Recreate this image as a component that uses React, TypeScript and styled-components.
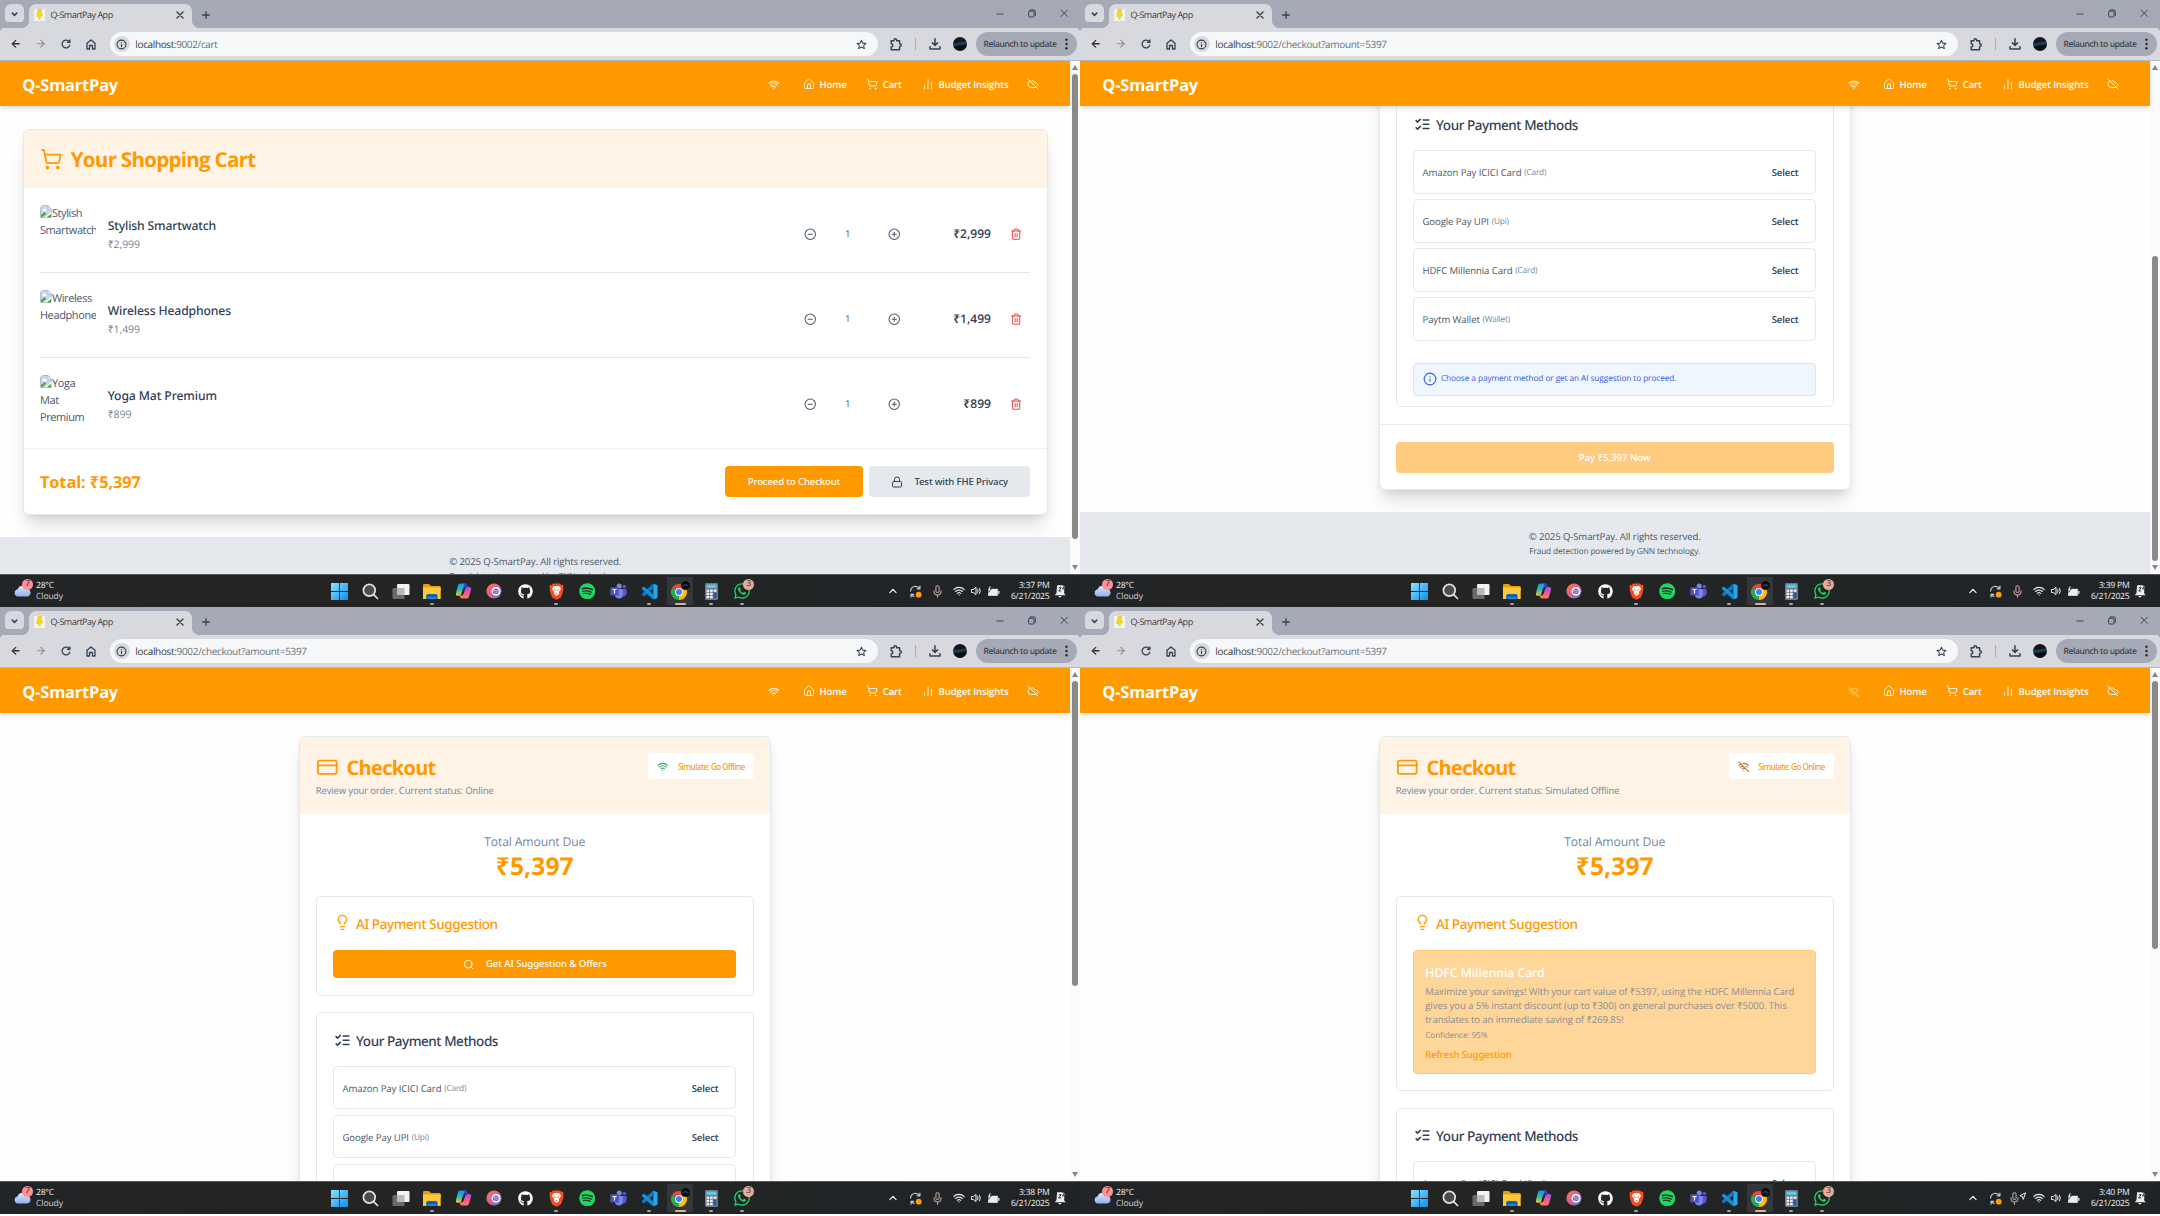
import React from "react";
import styled, { createGlobalStyle } from "styled-components";
import {
  ArrowLeft, ArrowRight, ChartNoAxesColumn, CircleMinus, CirclePlus, CloudOff, CreditCard, House, Info,
  Lightbulb, Lock, Search, ShoppingCart, Trash2, Wifi, WifiOff,
} from "lucide-react";
import { FaGithub, FaSpotify, FaWhatsapp } from "react-icons/fa";

const orange = "#ff9900";
const border = "#e4e9ee";
const ink = "#334155";
const muted = "#74879e";

const GlobalStyle = createGlobalStyle`
  * { box-sizing: border-box; }
  body {
    margin: 0;
    width: 2160px;
    height: 1216px;
    overflow: hidden;
    background: #fff;
    font-family: "Open Sans", "Noto Sans", sans-serif;
    color: ${ink};
    text-rendering: geometricPrecision;
  }
  svg { display: block; flex: none; }
`;

/* ---------- shared text ---------- */
const Text = styled.span<{ $size: number; $weight?: number; $color?: string; $track?: number; $lh?: number; $mt?: number }>`
  margin-top: ${(p) => p.$mt ?? 0}px;
  font-family: ${(p) => (p.$weight === 500 ? '"Noto Sans", sans-serif' : "inherit")};
  font-size: ${(p) => p.$size}px;
  font-weight: ${(p) => p.$weight ?? 400};
  color: ${(p) => p.$color ?? "inherit"};
  letter-spacing: ${(p) => p.$track ?? 0}px;
  line-height: ${(p) => p.$lh ?? 14}px;
  white-space: nowrap;
`;

/* ---------- desktop and browser chrome ---------- */
const Desktop = styled.div`
  display: grid;
  grid-template-columns: 1080px 1080px;
  grid-template-rows: 607px 607px;
`;
const Screen = styled.section`
  display: flex;
  flex-direction: column;
  overflow: hidden;
`;
const TabStrip = styled.div`
  display: flex;
  height: 28px;
  flex: none;
  background: #a6aab6;
  padding: 4px 12px 0 5px;
  align-items: flex-start;
`;
const TabSearch = styled.div`
  display: flex;
  width: 19px;
  height: 20px;
  border-radius: 6px;
  background: #d8d9df;
  align-items: center;
  justify-content: center;
`;
const Tab = styled.div`
  position: relative;
  display: flex;
  width: 163.5px;
  height: 24px;
  margin-left: 4.5px;
  padding: 0 7.8px 3px 5.5px;
  border-radius: 7px 7px 0 0;
  background: #d8d9df;
  color: #3a3c42;
  align-items: center;
  &::before, &::after {
    content: "";
    position: absolute;
    bottom: 0;
    width: 7px;
    height: 7px;
  }
  &::before { left: -7px; background: radial-gradient(circle at 0 0, transparent 6.6px, #d8d9df 7.2px); }
  &::after { right: -7px; background: radial-gradient(circle at 100% 0, transparent 6.6px, #d8d9df 7.2px); }
`;
const Favicon = styled.div`
  display: flex;
  width: 11px;
  height: 12px;
  margin-right: 5.5px;
  background: #f4f3ea;
  align-items: center;
  justify-content: center;
`;
const TabClose = styled.div`margin-left: auto;`;
const NewTab = styled.div`margin: 6.5px 0 0 9.5px;`;
const WindowButtons = styled.div`
  display: flex;
  width: 72px;
  margin: 5px 0 0 auto;
  align-items: center;
  justify-content: space-between;
`;
const Toolbar = styled.div`
  display: flex;
  height: 33px;
  flex: none;
  padding: 0 3px 0 2.7px;
  border-bottom: 1.5px solid #b4b6bd;
  background: linear-gradient(#d8d9df, #d8d9df) padding-box;
  border-radius: 5px 5px 0 0;
  box-shadow: 0 -6px 0 0 #a6aab6;
  align-items: center;
`;
const ToolCell = styled.div<{ $w: number }>`
  display: flex;
  width: ${(p) => p.$w}px;
  flex: none;
  align-items: center;
  justify-content: center;
`;
const Omnibox = styled.div`
  display: flex;
  width: 768px;
  height: 24px;
  margin-left: 6px;
  padding: 0 11px 0 3.7px;
  border-radius: 12px;
  background: #f5f7f9;
  align-items: center;
`;
const SiteInfo = styled.div`
  display: flex;
  width: 16px;
  height: 16px;
  margin-right: 5.8px;
  border-radius: 50%;
  background: #d8d9df;
  align-items: center;
  justify-content: center;
`;
const StarSlot = styled.div`margin-left: auto;`;
const Separator = styled.div`width: 1px; height: 12px; background: #a6aab6;`;
const Avatar = styled.div`
  width: 14px;
  height: 14px;
  border-radius: 50%;
  background: linear-gradient(170deg, #15181a 38%, #1d4c6c 46%, #10283b 58%, #090b0d 66%);
`;
const UpdatePill = styled.div`
  display: flex;
  width: 101.5px;
  height: 24px;
  padding: 0 9.5px 0 8px;
  margin-left: auto;
  border-radius: 12px;
  background: #a6aab6;
  color: #3a3d44;
  align-items: center;
  justify-content: space-between;
`;

/* ---------- page frame ---------- */
const PageRow = styled.div`display: flex; height: 512.5px; flex: none; overflow: hidden; background: #fefefe;`;
const Viewport = styled.div<{ $w: number }>`
  display: flex;
  flex-direction: column;
  width: ${(p) => p.$w}px;
  flex: none;
`;
const Header = styled.header<{ $w: number }>`
  position: relative;
  z-index: 1;
  display: flex;
  height: 45.3px;
  flex: none;
  padding: 3px ${(p) => p.$w - 1038.5}px 0 22.3px;
  background: ${orange};
  color: #fff;
  box-shadow: 0 2px 4px rgba(0, 0, 0, 0.14);
  align-items: center;
  justify-content: space-between;
`;
const Nav = styled.nav`display: flex; align-items: center;`;
const NavItem = styled.div<{ $w: number }>`
  display: flex;
  width: ${(p) => p.$w}px;
  gap: 5px;
  align-items: center;
`;
const NavIcon = styled.div<{ $color?: string }>`margin-top: -1.5px; color: ${(p) => p.$color ?? "#fff3df"};`;
const Scroller = styled.div<{ $end?: boolean }>`
  display: flex;
  flex: 1;
  min-height: 0;
  flex-direction: column;
  overflow: hidden;
  justify-content: ${(p) => (p.$end ? "flex-end" : "flex-start")};
`;
const Main = styled.main`flex: none; padding: 22.7px 22.5px;`;
const Footer = styled.footer`
  display: flex;
  flex: none;
  height: 61.2px;
  padding-top: 17px;
  background: #e5e8ed;
  color: #4a5869;
  flex-direction: column;
  align-items: center;
`;
const ScrollTrack = styled.div`
  display: flex;
  flex: 1;
  padding: 4px 1.5px 4px 2.2px;
  background: #fbfbfb;
  flex-direction: column;
  align-items: center;
`;
const Arrow = styled.div<{ $down?: boolean }>`
  border: 3.4px solid transparent;
  border-${(p) => (p.$down ? "top" : "bottom")}: 5px solid #868686;
  border-${(p) => (p.$down ? "bottom" : "top")}-width: 0;
`;
const Thumb = styled.div<{ $top: number; $h: number }>`
  width: 6px;
  height: ${(p) => p.$h}px;
  margin: ${(p) => p.$top}px 0 auto;
  border-radius: 3px;
  background: #8a8a8a;
`;

/* ---------- cards ---------- */
const Card = styled.div<{ $w?: number }>`
  width: ${(p) => (p.$w ? p.$w + "px" : "auto")};
  margin: 0 auto;
  border: 1px solid ${border};
  border-radius: 6px;
  background: #fff;
  box-shadow: 0 14px 18px -4px rgba(0, 0, 0, 0.13), 0 4px 8px -3px rgba(0, 0, 0, 0.1);
`;
const Banner = styled.div<{ $h: number }>`
  display: flex;
  height: ${(p) => p.$h}px;
  padding: 15.8px 16.2px;
  border-radius: 5px 5px 0 0;
  background: #fff3e6;
  color: ${orange};
  justify-content: space-between;
  align-items: flex-start;
`;
const TitleRow = styled.div<{ $gap: number }>`display: flex; gap: ${(p) => p.$gap}px; align-items: center;`;

/* cart */
const CartList = styled.div`padding: 0 16.4px;`;
const CartRow = styled.div<{ $last?: boolean }>`
  display: flex;
  height: ${(p) => (p.$last ? 90.4 : 85)}px;
  padding-top: 16.9px;
  border-bottom: ${(p) => (p.$last ? "none" : `1px solid ${border}`)};
`;
const Thumbnail = styled.div`
  width: 56.3px;
  height: 56.3px;
  border-radius: 4px;
  overflow: hidden;
  color: #4b5869;
`;
const AltLine = styled.div`display: flex; height: 17px; align-items: center;`;
const BrokenMark = styled.div`align-self: flex-start;`;
const ItemText = styled.div`
  display: flex;
  padding: 11px 0 0 11.5px;
  flex-direction: column;
`;
const ItemControls = styled.div`
  display: flex;
  height: 58px;
  margin-left: auto;
  align-items: center;
  color: #4b5869;
`;
const ControlCell = styled.div<{ $w: number; $end?: boolean; $color?: string }>`
  display: flex;
  width: ${(p) => p.$w}px;
  color: ${(p) => p.$color ?? "inherit"};
  justify-content: ${(p) => (p.$end ? "flex-end" : "center")};
`;
const CartFooter = styled.div`
  display: flex;
  height: 65.2px;
  padding: 0 16.4px;
  border-top: 1.5px solid #eef1f4;
  align-items: center;
`;
const CartButton = styled.button<{ $w: number; $soft?: boolean }>`
  display: flex;
  width: ${(p) => p.$w}px;
  height: 31.5px;
  padding: 0;
  margin-left: ${(p) => (p.$soft ? "6px" : "auto")};
  border: 0;
  border-radius: 4px;
  gap: 11px;
  font-family: inherit;
  background: ${(p) => (p.$soft ? "#e5e8ed" : orange)};
  color: ${(p) => (p.$soft ? ink : "#fff")};
  align-items: center;
  justify-content: center;
`;

/* checkout */
const StatusButton = styled.button<{ $w: number }>`
  display: flex;
  width: ${(p) => p.$w}px;
  height: 26px;
  margin-top: 0.7px;
  padding: 1px 9px 0 9px;
  border: 0;
  border-radius: 4px;
  background: #fff;
  color: ${orange};
  font-family: inherit;
  align-items: center;
  justify-content: space-between;
`;
const CheckoutBody = styled.div`padding: 16.9px 16.4px;`;
const Due = styled.div`display: flex; height: 65px; padding-top: 1.2px; flex-direction: column; align-items: center;`;
const Panel = styled.div<{ $bottom?: number }>`
  margin-bottom: 16.9px;
  padding: 16.4px 16.2px ${(p) => p.$bottom ?? 16.4}px;
  border: 1px solid ${border};
  border-radius: 5px;
  &:last-child { margin-bottom: 0; }
`;
const PanelTitle = styled.div<{ $color: string }>`
  display: flex;
  height: 36px;
  padding-left: 1px;
  gap: 5px;
  color: ${(p) => p.$color};
  align-items: flex-start;
`;
const WideButton = styled.button<{ $h: number; $faded?: boolean }>`
  display: flex;
  width: 100%;
  height: ${(p) => p.$h}px;
  padding: 1px 0 0;
  border: 0;
  border-radius: 4px;
  gap: 12px;
  background: ${(p) => (p.$faded ? "#ffcb80" : orange)};
  color: #fff;
  font-family: inherit;
  align-items: center;
  justify-content: center;
`;
const Suggestion = styled.div`
  display: flex;
  height: 124px;
  padding: 12px 11.2px;
  border: 1px solid #ffc978;
  border-radius: 4px;
  background: #ffd699;
  color: #8b8f94;
  flex-direction: column;
`;
const Methods = styled.div`display: flex; flex-direction: column; gap: 5.5px;`;
const Method = styled.div`
  display: flex;
  height: 43.5px;
  padding: 2px 17px 0 8.4px;
  border: 1px solid ${border};
  border-radius: 4.5px;
  gap: 2.8px;
  align-items: center;
`;
const SelectLabel = styled.div`margin-left: auto; display: flex;`;
const Hint = styled.div`
  display: flex;
  height: 32.7px;
  margin-top: 22px;
  padding: 0 8.5px;
  border: 1px solid #d3e5fd;
  border-radius: 4px;
  gap: 4.4px;
  background: #eff6ff;
  color: #3561e0;
  align-items: center;
`;
const PayFooter = styled.div`height: 64.5px; padding: 16.4px 16.4px; border-top: 1px solid #e6edf3;`;

/* taskbar */
const Taskbar = styled.div`
  display: grid;
  grid-template-columns: 323.5px 434px 1fr;
  height: 33.5px;
  flex: none;
  border-top: 1px solid #55585a;
  background: linear-gradient(90deg, #212528, #252423 25%, #222425 60%, #212427);
  color: #f0f0f0;
`;
const Weather = styled.div`display: flex; padding-left: 13px; align-items: center;`;
const WeatherIcon = styled.div`position: relative; width: 23px; height: 22px;`;
const Badge = styled.div<{ $x: number; $y: number; $color: string }>`
  position: absolute;
  left: ${(p) => p.$x}px;
  top: ${(p) => p.$y}px;
  display: flex;
  width: 11px;
  height: 11px;
  border-radius: 50%;
  background: ${(p) => p.$color};
  color: #2a1b1b;
  align-items: center;
  justify-content: center;
`;
const Stack = styled.div<{ $end?: boolean }>`
  display: flex;
  flex-direction: column;
  align-items: ${(p) => (p.$end ? "flex-end" : "flex-start")};
`;
const Apps = styled.div`display: flex;`;
const AppSlot = styled.div<{ $active?: boolean }>`
  position: relative;
  display: flex;
  width: 31px;
  height: 33px;
  align-items: center;
  justify-content: center;
  background: ${(p) => (p.$active ? "radial-gradient(#34373a 0 0) center / 26px 28px no-repeat" : "none")};
`;
const Running = styled.div<{ $active?: boolean }>`
  position: absolute;
  bottom: 2.6px;
  width: ${(p) => (p.$active ? 11 : 4.5)}px;
  height: 2px;
  border-radius: 1px;
  background: ${(p) => (p.$active ? "#e8ab98" : "#a0a2a3")};
`;
const Tray = styled.div`display: flex; padding-left: 124.5px; align-items: center;`;
const TrayCell = styled.div<{ $w: number }>`
  display: flex;
  width: ${(p) => p.$w}px;
  flex: none;
  justify-content: center;
`;
const Clock = styled.div`width: 47px; flex: none;`;

/* ---------- drawings ---------- */
const line = { fill: "none", stroke: "currentColor", strokeLinecap: "round" as const, strokeLinejoin: "round" as const };

const Checklist = () => (
  <svg width="17" height="19" viewBox="0 -2 24 26" {...line} strokeWidth="2.300">
    <path d="m3 17 2 2 4-4M3 7l2 2 4-4M13 6h8M13 12h8M13 18h8" />
  </svg>
);
const BrokenImage = () => (
  <svg width="12" height="13" viewBox="0 0 12 13">
    <path d="M.5 3Q.5.5 3 .5h5l3.500 4V12.500H.5z" fill="#c6d8f2" stroke="#a9b2bd" strokeWidth=".8" />
    <path d="M8 .5v4h3.500z" fill="#eef2f6" stroke="#a9b2bd" strokeWidth=".6" />
    <ellipse cx="4.500" cy="5" rx="2" ry="1.200" fill="#fff" />
    <path d="M1 12.400V10l3.500-3 2 1.800L1.800 12.400z" fill="#5aa63c" />
    <path d="M5 12.400 11.500 6.500V12.400z" fill="#fff" />
    <path d="M6.500 12.400 11 9v3.400z" fill="#4e9c35" />
  </svg>
);
const WindowsLogo = () => (
  <svg width="17" height="17" viewBox="0 0 17 17">
    <defs><linearGradient id="win" x1="0" y1="0" x2="1" y2="1"><stop offset="0" stopColor="#8be4fd" /><stop offset="1" stopColor="#0a8df0" /></linearGradient></defs>
    <path d="M0 0h8.100v8.100H0zM8.900 0H17v8.100H8.900zM0 8.900h8.100V17H0zM8.900 8.900H17V17H8.900z" fill="url(#win)" />
  </svg>
);
const SearchLogo = () => (
  <svg width="17" height="17" viewBox="0 0 17 17" {...line} stroke="#e3e3e3" strokeWidth="1.700">
    <circle cx="7.300" cy="7.300" r="5.900" fill="#4b4d50" /><path d="m11.700 11.700 3.800 3.800" />
  </svg>
);
const TaskViewLogo = () => (
  <svg width="18" height="17" viewBox="0 0 18 17">
    <rect x=".5" y="5" width="12" height="11" rx="1" fill="#6a6b6d" />
    <rect x="5" y="1" width="12.500" height="11" rx="1" fill="#f3f3f3" />
    <rect x="5" y="5" width="7.500" height="7" fill="#b9b9b9" />
  </svg>
);
const FolderLogo = () => (
  <svg width="18" height="17" viewBox="0 0 18 17">
    <path d="M0 2.200Q0 1 1.200 1H6l1.800 2H16.500q1.200 0 1.200 1.200V8H0z" fill="#e3a008" />
    <path d="M0 4.500h17.700V16H0z" fill="#fdc93b" />
    <path d="M3.200 16v-3.300q0-1.700 1.700-1.700h8q1.700 0 1.700 1.700V16z" fill="#0f62ad" />
    <path d="M4.600 14h8.600v2H4.600z" fill="#1c86d9" />
  </svg>
);
const CopilotLogo = () => (
  <svg width="17" height="16" viewBox="0 0 17 16">
    <defs>
      <linearGradient id="cpA" x1="0" y1="0" x2="0" y2="1"><stop offset="0" stopColor="#1d8cf2" /><stop offset=".5" stopColor="#22c0a8" /><stop offset="1" stopColor="#f5c62c" /></linearGradient>
      <linearGradient id="cpB" x1="0" y1="0" x2="0" y2="1"><stop offset="0" stopColor="#a04cf0" /><stop offset=".5" stopColor="#f0559f" /><stop offset="1" stopColor="#fb8250" /></linearGradient>
    </defs>
    <path d="M5 .5h5q1.500 0 2 1.500l.5 2H9.800q-1.400 0-1.900 1.500L6.300 11q-.6 1.800-2.200 1.800H2.300Q.4 12.800.9 10.500L3 2.200Q3.500.5 5 .5z" fill="url(#cpA)" />
    <path d="M12 15.500H7q-1.500 0-2-1.500l-.5-1.700h2.200q1.400 0 1.900-1.500L10.300 5.500Q10.900 4 12.500 4h2q2 0 1.600 2.200L14 13.800q-.5 1.700-2 1.700z" fill="url(#cpB)" />
    <path d="M9.500.5h.8q1.400 0 1.800 1.500l.5 2H10q-1.200 0-1.700 1.200z" fill="#2448c8" />
  </svg>
);
const SwirlLogo = () => (
  <svg width="16" height="16" viewBox="0 0 16 16">
    <defs><linearGradient id="sw" x1="0" y1="0" x2="1" y2="1"><stop offset="0" stopColor="#fb7b3c" /><stop offset=".45" stopColor="#e85f8e" /><stop offset="1" stopColor="#3b7fe8" /></linearGradient></defs>
    <circle cx="8" cy="8" r="7.600" fill="url(#sw)" />
    <circle cx="10" cy="8.200" r="4.500" fill="#e9e4f7" />
    <path d="M7.800 10.300Q7.200 6.300 10 6.300q2.300 0 2.100 2.300T9.900 10.400Q8.500 9.900 9 8.700q.6-.9 1.500-.4" {...line} stroke="#473c8f" strokeWidth="1" />
  </svg>
);
const BraveLogo = () => (
  <svg width="15" height="17" viewBox="0 0 15 17">
    <path d="M4 .5h7l1.400 1.400 1.300-.2 1 1.800-.6 1.500.4 1.800-2 6.300q-.3 1-1.200 1.600L7.500 16.800l-3.800-2.100q-.9-.6-1.200-1.600L.5 6.800.9 5 .3 3.500l1-1.800 1.300.2z" fill="#fb4b1c" />
    <path d="M7.500 3.200 10 2.900l2 2.400-.5 1.800-1.800 2 .5 1.700-2.700 2.300-2.700-2.300.5-1.700-1.800-2L3 5.300l2-2.400z" fill="#fff" />
    <path d="M4.500 5.800 6.800 7 6.300 8.300zM10.500 5.800 8.200 7l.5 1.300zM6.200 10.300h2.600L7.500 11.500z" fill="#fb4b1c" />
  </svg>
);
const TeamsLogo = () => (
  <svg width="17" height="16" viewBox="0 0 17 16">
    <circle cx="9.200" cy="3" r="2.600" fill="#7b83eb" /><circle cx="14.300" cy="3.600" r="1.800" fill="#5059c9" />
    <path d="M12 6h4.700v4.500a3 3 0 0 1-4 2.700z" fill="#5059c9" />
    <path d="M5 6h8v5.500a4 4 0 0 1-8 0z" fill="#7b83eb" />
    <rect x=".3" y="4.200" width="8.400" height="8.400" rx=".8" fill="#4b53bc" />
    <path d="M2.500 6.500h4M4.500 6.500v4" stroke="#fff" strokeWidth="1.200" />
  </svg>
);
const CodeLogo = () => (
  <svg width="17" height="17" viewBox="0 0 17 17">
    <path d="M12.300.4 16.500 2.300v12.400l-4.200 1.900z" fill="#27a7f0" />
    <path d="M12.300.4 13 5 3.200 13.200 1 12.300v-1.500z" fill="#0a7bcb" />
    <path d="M1 4.600 3.200 3.800 13 12l-.7 4.600L1 6.200z" fill="#1390dc" />
  </svg>
);
const ChromeLogo = () => (
  <svg width="20" height="20" viewBox="0 0 20 20">
    <path d="M9 11 2.070 7A8 8 0 0 1 15.930 7z" fill="#e8453c" />
    <path d="M9 11 2.070 7A8 8 0 0 0 9 19z" fill="#2da94f" />
    <path d="M9 11 15.930 7A8 8 0 0 1 9 19z" fill="#fdbd00" />
    <circle cx="9" cy="11" r="3.900" fill="#fff" /><circle cx="9" cy="11" r="3" fill="#3b83f5" />
    <circle cx="15.500" cy="4.500" r="4.400" fill="#0a0d10" /><path d="M12.500 4.500q3-1.600 6 0" stroke="#1a5b86" strokeWidth="1" fill="none" />
  </svg>
);
const CalcLogo = () => (
  <svg width="13" height="17" viewBox="0 0 13 17">
    <rect width="13" height="17" rx="1.200" fill="#6c7680" /><rect x="1.500" y="1.500" width="10" height="3.500" fill="#58c8ec" />
    {[0, 1, 2].map((r) => [0, 1].map((c) => <rect key={`${r}${c}`} x={1.5 + c * 3.5} y={6.5 + r * 3.2} width="2.700" height="2.400" fill="#e9ecef" />))}
    <rect x="8.600" y="6.500" width="2.900" height="2.400" fill="#e9ecef" /><rect x="8.600" y="9.700" width="2.900" height="5.600" fill="#1660b0" />
  </svg>
);

const ChevronDown = () => <svg width="7" height="5" viewBox="0 0 7 5" {...line} strokeWidth="1.600"><path d="m1.200 1 2.300 2.400L5.800 1" /></svg>;
const Pin = () => <svg width="7" height="11" viewBox="0 0 7 11"><path d="M2 .5h3.400L5.200 4 6.600 6.700 4.500 7 3.800 10.500 2.600 7.700.4 7.400 1.600 4.500z" fill="#f7dc1b" stroke="#d9b60c" strokeWidth=".5" /></svg>;
const Cross = ({ s, w }: { s: number; w: number }) => <svg width={s} height={s} viewBox="0 0 8 8" {...line} strokeWidth={w}><path d="m1 1 6 6M7 1 1 7" /></svg>;
const Plus = () => <svg width="8" height="8" viewBox="0 0 8 8" {...line} strokeWidth="1.300"><path d="M4 .7v6.600M.7 4h6.600" /></svg>;
const Reload = () => <svg width="10" height="10" viewBox="0 0 10 10" {...line} strokeWidth="1.300"><path d="M8.700 6.200A3.900 3.900 0 1 1 7.800 2.200L8.800 3.200M8.900.9V3.400H6.400" /></svg>;
const ChromeHome = () => <svg width="10" height="11" viewBox="0 0 10 11" {...line} strokeWidth="1.300"><path d="M1 4.200 5 .9l4 3.300V10H6.500V6.500h-3V10H1z" /></svg>;
const SiteIcon = () => <svg width="11" height="11" viewBox="0 0 11 11" {...line} strokeWidth="1.100"><circle cx="5.500" cy="5.500" r="4.400" /><path d="M5.500 5v2.700M5.500 3.200v.1" /></svg>;
const Star = () => <svg width="11" height="11" viewBox="0 0 12 12" {...line} strokeWidth="1.100"><path d="m6 1.300 1.400 3.200 3.500.3-2.600 2.300.8 3.400L6 8.700l-3.100 1.800.8-3.400L1.100 4.800l3.500-.3z" /></svg>;
const Puzzle = () => <svg width="12" height="13" viewBox="0 0 12 13" {...line} strokeWidth="1.400"><path d="M1.200 2.800H4V2a1.300 1.300 0 0 1 2.600 0v.8h3v3h.4a1.300 1.300 0 0 1 0 2.600h-.4v3.400H1.200V9q1.700-.2 1.700-1.600T1.200 5.800z" /></svg>;
const Download = () => <svg width="12" height="12" viewBox="0 0 12 12" {...line} strokeWidth="1.500"><path d="M6 .8v6.400M3.400 4.900 6 7.400l2.600-2.500M1 8.700V11h10V8.700" /></svg>;
const Dots = () => <svg width="3" height="12" viewBox="0 0 3 12" fill="#26282c"><circle cx="1.500" cy="1.800" r="1.200" /><circle cx="1.500" cy="6" r="1.200" /><circle cx="1.500" cy="10.200" r="1.200" /></svg>;
const Restore = () => <svg width="8" height="9" viewBox="0 0 8 9" {...line} strokeWidth="1"><rect x=".7" y="2.200" width="5.300" height="5.800" rx="1" /><path d="M2.300.9h3.500q1.500 0 1.500 1.500v4" /></svg>;
const Cloud = () => (
  <svg width="19" height="22" viewBox="-1 -4 19 22">
    <defs><linearGradient id="cl" x1="0" y1="0" x2="0" y2="1"><stop offset="0" stopColor="#dbe8fb" /><stop offset="1" stopColor="#8fb0ec" /></linearGradient></defs>
    <path d="M4 12.500a3.700 3.700 0 0 1-.3-7.300A5 5 0 0 1 13 4.800a3.900 3.900 0 0 1 .3 7.700z" fill="url(#cl)" />
  </svg>
);
const TrayChevron = () => <svg width="8" height="6" viewBox="0 0 8 6" {...line} strokeWidth="1.200"><path d="M.9 4.600 4 1.300l3.100 3.300" /></svg>;
const Sync = () => (
  <svg width="13" height="13" viewBox="0 0 13 13" {...line} strokeWidth="1.200" stroke="#c8c8c8">
    <path d="M1.600 6A4.900 4.900 0 0 1 10.600 3.600M10.900 1v2.800H8.200M2 12V9.400h2.600M2.200 9.600A5 5 0 0 0 5 11.300" /><circle cx="9.700" cy="9.700" r="2.900" fill="#ff9b10" stroke="none" />
  </svg>
);
const Mic = () => <svg width="9" height="13" viewBox="0 0 9 13" {...line} strokeWidth="1.100" stroke="#c2a397"><rect x="2.900" y=".8" width="3.200" height="6.700" rx="1.600" /><path d="M1 5.800v.6a3.500 3.500 0 0 0 7 0v-.6M4.500 10v2.200" /></svg>;
const Locate = () => <svg width="7" height="8" viewBox="0 0 7 8" {...line} strokeWidth="1"><path d="M6.200 1 .9 3.700l2.400.8.8 2.500z" /></svg>;
const TrayWifi = () => <svg width="12" height="10" viewBox="0 0 12 10" {...line} strokeWidth="1.100"><path d="M.8 3.600a7.300 7.300 0 0 1 10.400 0M2.600 5.500a4.800 4.800 0 0 1 6.800 0M4.400 7.300a2.300 2.300 0 0 1 3.200 0" /><circle cx="6" cy="8.900" r=".6" fill="currentColor" stroke="none" /></svg>;
const Volume = () => <svg width="11" height="10" viewBox="0 0 11 10" {...line} strokeWidth="1"><path d="M.8 3.500h1.700L5 1.300v7.400L2.500 6.500H.8zM6.700 3.500q1 1.500 0 3M8.400 2.200q2 2.800 0 5.600" /></svg>;
const Battery = () => <svg width="13" height="11" viewBox="0 0 12 10"><path d="M1 2.500h9v6.500H1z" fill="#ededed" /><rect x="10.300" y="4.500" width="1.200" height="2.600" fill="#ededed" /><path d="M2.500 0 .6 3.500H2L1.400 6 4.200 2.700H2.700L3.800 0z" fill="#fff" stroke="#222" strokeWidth=".5" /></svg>;
const Bell = () => <svg width="13" height="14" viewBox="0 0 11 12"><path d="M2.600 1h6.400L8.600 8l1.300 1.600H.6L2 8z" fill="#ededed" /><path d="M3.500 10.300h3l-1.500 1.400z" fill="#ededed" /><path d="M4 3.200h2L4 6h2M7 1h2.300L7.200 4.200h2.200" stroke="#222" strokeWidth=".8" fill="none" /></svg>;

/* ---------- chrome pieces ---------- */
const BrowserBar = ({ path }: { path: string }) => (
  <>
    <TabStrip>
      <TabSearch><ChevronDown /></TabSearch>
      <Tab>
        <Favicon><Pin /></Favicon>
        <Text $size={9} $track={-0.49}>Q-SmartPay App</Text>
        <TabClose><Cross s={8} w={1.4} /></TabClose>
      </Tab>
      <NewTab><Plus /></NewTab>
      <WindowButtons>
        <svg width="8" height="2"><path d="M.5 1h7" stroke="#4b4d55" /></svg>
        <Restore />
        <Cross s={8.5} w={0.9} />
      </WindowButtons>
    </TabStrip>
    <Toolbar>
      <ToolCell $w={25.3}><ArrowLeft size={11.5} strokeWidth={2.7} color="#303238" /></ToolCell>
      <ToolCell $w={25.3}><ArrowRight size={11.5} strokeWidth={2.4} color="#8e9097" /></ToolCell>
      <ToolCell $w={25.3}><Reload /></ToolCell>
      <ToolCell $w={25.3}><ChromeHome /></ToolCell>
      <Omnibox>
        <SiteInfo><SiteIcon /></SiteInfo>
        <Text $size={10} $mt={0.5} $track={path === "/cart" ? -0.37 : -0.33} $color="#3b3d42">localhost</Text>
        <Text $size={10} $mt={0.5} $track={path === "/cart" ? -0.37 : -0.33} $color="#6e7278">:9002{path}</Text>
        <StarSlot><Star /></StarSlot>
      </Omnibox>
      <ToolCell $w={37}><Puzzle /></ToolCell>
      <Separator />
      <ToolCell $w={37.5}><Download /></ToolCell>
      <ToolCell $w={14}><Avatar /></ToolCell>
      <UpdatePill>
        <Text $size={8.6} $weight={500} $track={-0.4}>Relaunch to update</Text>
        <Dots />
      </UpdatePill>
    </Toolbar>
  </>
);

type PageProps = { path: string; offline?: boolean; width?: number; end?: boolean; thumb: [number, number]; time: string; locating?: boolean; children: React.ReactNode };

const SiteHeader = ({ offline, width }: { offline?: boolean; width: number }) => (
  <Header $w={width}>
    <Text $size={16.4} $weight={700} $track={-0.17} $lh={20}>Q-SmartPay</Text>
    <Nav>
      <NavItem $w={34.4}>
        <NavIcon $color={offline ? "#fdcb5c" : undefined}>{offline ? <WifiOff size={11.5} strokeWidth={2.3} /> : <Wifi size={11.5} strokeWidth={2.3} />}</NavIcon>
      </NavItem>
      <NavItem $w={63.2}>
        <NavIcon><House size={12} /></NavIcon>
        <Text $size={9.6} $weight={600} $track={-0.19}>Home</Text>
      </NavItem>
      <NavItem $w={55.8}>
        <NavIcon><ShoppingCart size={12} /></NavIcon>
        <Text $size={9.6} $weight={600} $track={-0.15}>Cart</Text>
      </NavItem>
      <NavItem $w={105}>
        <NavIcon><ChartNoAxesColumn size={12} /></NavIcon>
        <Text $size={9.6} $weight={600} $track={-0.12}>Budget Insights</Text>
      </NavItem>
      <NavIcon><CloudOff size={12} /></NavIcon>
    </Nav>
  </Header>
);

const apps: { icon: React.ReactNode; running?: boolean; active?: boolean; badge?: string }[] = [
  { icon: <WindowsLogo /> },
  { icon: <SearchLogo /> },
  { icon: <TaskViewLogo /> },
  { icon: <FolderLogo />, running: true },
  { icon: <CopilotLogo /> },
  { icon: <SwirlLogo /> },
  { icon: <FaGithub size={15} color="#fff" /> },
  { icon: <BraveLogo />, running: true },
  { icon: <FaSpotify size={16.5} color="#1ed760" /> },
  { icon: <TeamsLogo /> },
  { icon: <CodeLogo />, running: true },
  { icon: <ChromeLogo />, running: true, active: true },
  { icon: <CalcLogo />, running: true },
  { icon: <FaWhatsapp size={18} color="#23d366" />, running: true, badge: "3" },
];

const SystemBar = ({ time, locating }: { time: string; locating?: boolean }) => (
  <Taskbar>
    <Weather>
      <WeatherIcon>
        <Cloud />
        <Badge $x={9.2} $y={-1.3} $color="#ff8f98"><Text $size={8.2} $lh={10}>7</Text></Badge>
      </WeatherIcon>
      <Stack>
        <Text $size={8.6} $track={-0.23} $lh={11.4}>28°C</Text>
        <Text $size={8.6} $track={-0.1} $lh={11.4} $color="#cfcfcf">Cloudy</Text>
      </Stack>
    </Weather>
    <Apps>
      {apps.map((a, i) => (
        <AppSlot key={i} $active={a.active}>
          {a.icon}
          {a.running && <Running $active={a.active} />}
          {a.badge && <Badge $x={16.6} $y={4.4} $color="#e8ab98"><Text $size={8.4} $lh={10}>{a.badge}</Text></Badge>}
        </AppSlot>
      ))}
    </Apps>
    <Tray>
      <TrayCell $w={22.3}><TrayChevron /></TrayCell>
      <TrayCell $w={22.3}><Sync /></TrayCell>
      <TrayCell $w={22.3}><Mic />{locating && <Locate />}</TrayCell>
      <TrayCell $w={19.5}><TrayWifi /></TrayCell>
      <TrayCell $w={17}><Volume /></TrayCell>
      <TrayCell $w={17}><Battery /></TrayCell>
      <Clock>
        <Stack $end>
          <Text $size={8.6} $track={-0.24} $lh={11.4}>{time}</Text>
          <Text $size={8.6} $track={-0.25} $lh={11.4}>6/21/2025</Text>
        </Stack>
      </Clock>
      <TrayCell $w={23}><Bell /></TrayCell>
    </Tray>
  </Taskbar>
);

const BrowserWindow = ({ path, offline, width = 1069.5, end, thumb, time, locating, children }: PageProps) => (
  <Screen>
    <BrowserBar path={path} />
    <PageRow>
      <Viewport $w={width}>
        <SiteHeader offline={offline} width={width} />
        <Scroller $end={end}>
          <Main>{children}</Main>
          <Footer>
            <Text $size={9.6} $track={-0.11} $lh={15}>© 2025 Q-SmartPay. All rights reserved.</Text>
            <Text $size={8.3} $track={-0.13} $lh={15}>Fraud detection powered by GNN technology.</Text>
          </Footer>
        </Scroller>
      </Viewport>
      <ScrollTrack>
        <Arrow />
        <Thumb $top={thumb[0]} $h={thumb[1]} />
        <Arrow $down />
      </ScrollTrack>
    </PageRow>
    <SystemBar time={time} locating={locating} />
  </Screen>
);

/* ---------- cart ---------- */
const items = [
  { alt: ["Stylish", "Smartwatch"], name: "Stylish Smartwatch", price: "₹2,999", track: -0.16 },
  { alt: ["Wireless", "Headphones"], name: "Wireless Headphones", price: "₹1,499", track: -0.13 },
  { alt: ["Yoga", "Mat", "Premium"], name: "Yoga Mat Premium", price: "₹899", track: -0.11 },
];

const Cart = () => (
  <Card>
    <Banner $h={58.1}>
      <TitleRow $gap={8.6}>
        <ShoppingCart size={22.5} strokeWidth={1.9} />
        <Text $size={20.5} $weight={700} $track={-0.7} $lh={26} $mt={1.6}>Your Shopping Cart</Text>
      </TitleRow>
    </Banner>
    <CartList>
      {items.map((it, i) => (
        <CartRow key={it.name} $last={i === items.length - 1}>
          <Thumbnail>
            {it.alt.map((word, n) => (
              <AltLine key={word}>
                {n === 0 && <BrokenMark><BrokenImage /></BrokenMark>}
                <Text $size={11} $track={-0.38} $mt={1.4}>{word}</Text>
              </AltLine>
            ))}
          </Thumbnail>
          <ItemText>
            <Text $size={12.2} $weight={500} $track={it.track} $lh={19}>{it.name}</Text>
            <Text $size={10.5} $track={-0.08} $color={muted} $lh={20}>{it.price}</Text>
          </ItemText>
          <ItemControls>
            <ControlCell $w={30}><CircleMinus size={12.5} /></ControlCell>
            <ControlCell $w={44.5}><Text $size={9.6}>1</Text></ControlCell>
            <ControlCell $w={49}><CirclePlus size={12.5} /></ControlCell>
            <ControlCell $w={72} $end $color={ink}><Text $size={12} $weight={600} $track={0.05}>{it.price}</Text></ControlCell>
            <ControlCell $w={31} $end $color="#f4474a"><Trash2 size={12.3} /></ControlCell>
            <ControlCell $w={8.4} />
          </ItemControls>
        </CartRow>
      ))}
    </CartList>
    <CartFooter>
      <Text $size={16.4} $weight={700} $track={-0.09} $color={orange} $lh={20}>Total: ₹5,397</Text>
      <CartButton $w={138}><Text $size={9.6} $weight={500} $track={-0.136}>Proceed to Checkout</Text></CartButton>
      <CartButton $w={161.5} $soft><Lock size={12} /><Text $size={9.6} $weight={500} $track={-0.145}>Test with FHE Privacy</Text></CartButton>
    </CartFooter>
  </Card>
);

/* ---------- checkout ---------- */
const methods = [
  ["Amazon Pay ICICI Card", "(Card)"],
  ["Google Pay UPI", "(Upi)"],
  ["HDFC Millennia Card", "(Card)"],
  ["Paytm Wallet", "(Wallet)"],
];

const Checkout = ({ offline, suggested }: { offline?: boolean; suggested?: boolean }) => (
  <Card $w={472.5}>
    <Banner $h={77.3}>
      <Stack>
        <TitleRow $gap={8.4}>
          <CreditCard size={22.5} strokeWidth={1.9} />
          <Text $size={20} $weight={700} $track={-0.7} $lh={27} $mt={1.2}>Checkout</Text>
        </TitleRow>
        <Text $size={9.6} $track={-0.18} $color={muted} $lh={19.6}>
          Review your order. Current status: {offline ? "Simulated Offline" : "Online"}
        </Text>
      </Stack>
      <StatusButton $w={offline ? 105 : 106}>
        {offline ? <WifiOff size={11.5} strokeWidth={2.3} color="#c07a3c" /> : <Wifi size={11.5} strokeWidth={2.4} color="#35b267" />}
        <Text $size={8} $weight={500} $track={-0.48}>Simulate: Go {offline ? "Online" : "Offline"}</Text>
      </StatusButton>
    </Banner>
    <CheckoutBody>
      <Due>
        <Text $size={12.2} $track={-0.15} $color={muted} $lh={19.7}>Total Amount Due</Text>
        <Text $size={24.6} $weight={700} $track={0.1} $color={orange} $lh={30.8}>₹5,397</Text>
      </Due>
      <Panel>
        <PanelTitle $color={orange}>
          <Lightbulb size={16.9} strokeWidth={1.9} />
          <Text $size={13.5} $weight={500} $track={-0.42} $lh={21}>AI Payment Suggestion</Text>
        </PanelTitle>
        {suggested ? (
          <Suggestion>
            <Text $size={12.2} $weight={500} $track={0} $color="#fff" $lh={20}>HDFC Millennia Card</Text>
            <Text $size={9.6} $track={-0.1} $lh={14.1} $mt={2}>
              Maximize your savings! With your cart value of ₹5397, using the HDFC Millennia Card<br />
              gives you a 5% instant discount (up to ₹300) on general purchases over ₹5000. This<br />
              translates to an immediate saving of ₹269.85!
            </Text>
            <Text $size={8.3} $track={-0.15} $lh={16} $mt={0.8}>Confidence: 95%</Text>
            <Text $size={9.6} $weight={500} $track={-0.15} $color={orange} $lh={22}>Refresh Suggestion</Text>
          </Suggestion>
        ) : (
          <WideButton $h={28.6}>
            <Search size={11.3} />
            <Text $size={9.6} $weight={500} $track={-0.079}>Get AI Suggestion &amp; Offers</Text>
          </WideButton>
        )}
      </Panel>
      <Panel $bottom={10.6}>
        <PanelTitle $color={ink}>
          <Checklist />
          <Text $size={13.5} $weight={500} $track={-0.45} $lh={22}>Your Payment Methods</Text>
        </PanelTitle>
        <Methods>
          {methods.map(([name, kind]) => (
            <Method key={name}>
              <Text $size={9.6} $track={-0.103} $color="#4a5869">{name}</Text>
              <Text $size={8.3} $track={-0.2} $mt={0.5} $color={muted}>{kind}</Text>
              <SelectLabel><Text $size={9.6} $weight={600} $track={-0.15}>Select</Text></SelectLabel>
            </Method>
          ))}
        </Methods>
        <Hint>
          <Info size={14} strokeWidth={1.9} />
          <Text $size={8.3} $track={-0.1}>Choose a payment method or get an AI suggestion to proceed.</Text>
        </Hint>
      </Panel>
    </CheckoutBody>
    <PayFooter>
      <WideButton $h={31.2} $faded><Text $size={9.6} $weight={500} $track={-0.025} $mt={0.8}>Pay ₹5,397 Now</Text></WideButton>
    </PayFooter>
  </Card>
);

export default function App() {
  return (
    <>
      <GlobalStyle />
      <Desktop>
        <BrowserWindow path="/cart" width={1070.3} thumb={[4, 465]} time="3:37 PM"><Cart /></BrowserWindow>
        <BrowserWindow path="/checkout?amount=5397" end thumb={[186, 305]} time="3:39 PM"><Checkout /></BrowserWindow>
        <BrowserWindow path="/checkout?amount=5397" thumb={[4, 305]} time="3:38 PM"><Checkout /></BrowserWindow>
        <BrowserWindow path="/checkout?amount=5397" offline thumb={[4, 268]} time="3:40 PM" locating><Checkout offline suggested /></BrowserWindow>
      </Desktop>
    </>
  );
}
